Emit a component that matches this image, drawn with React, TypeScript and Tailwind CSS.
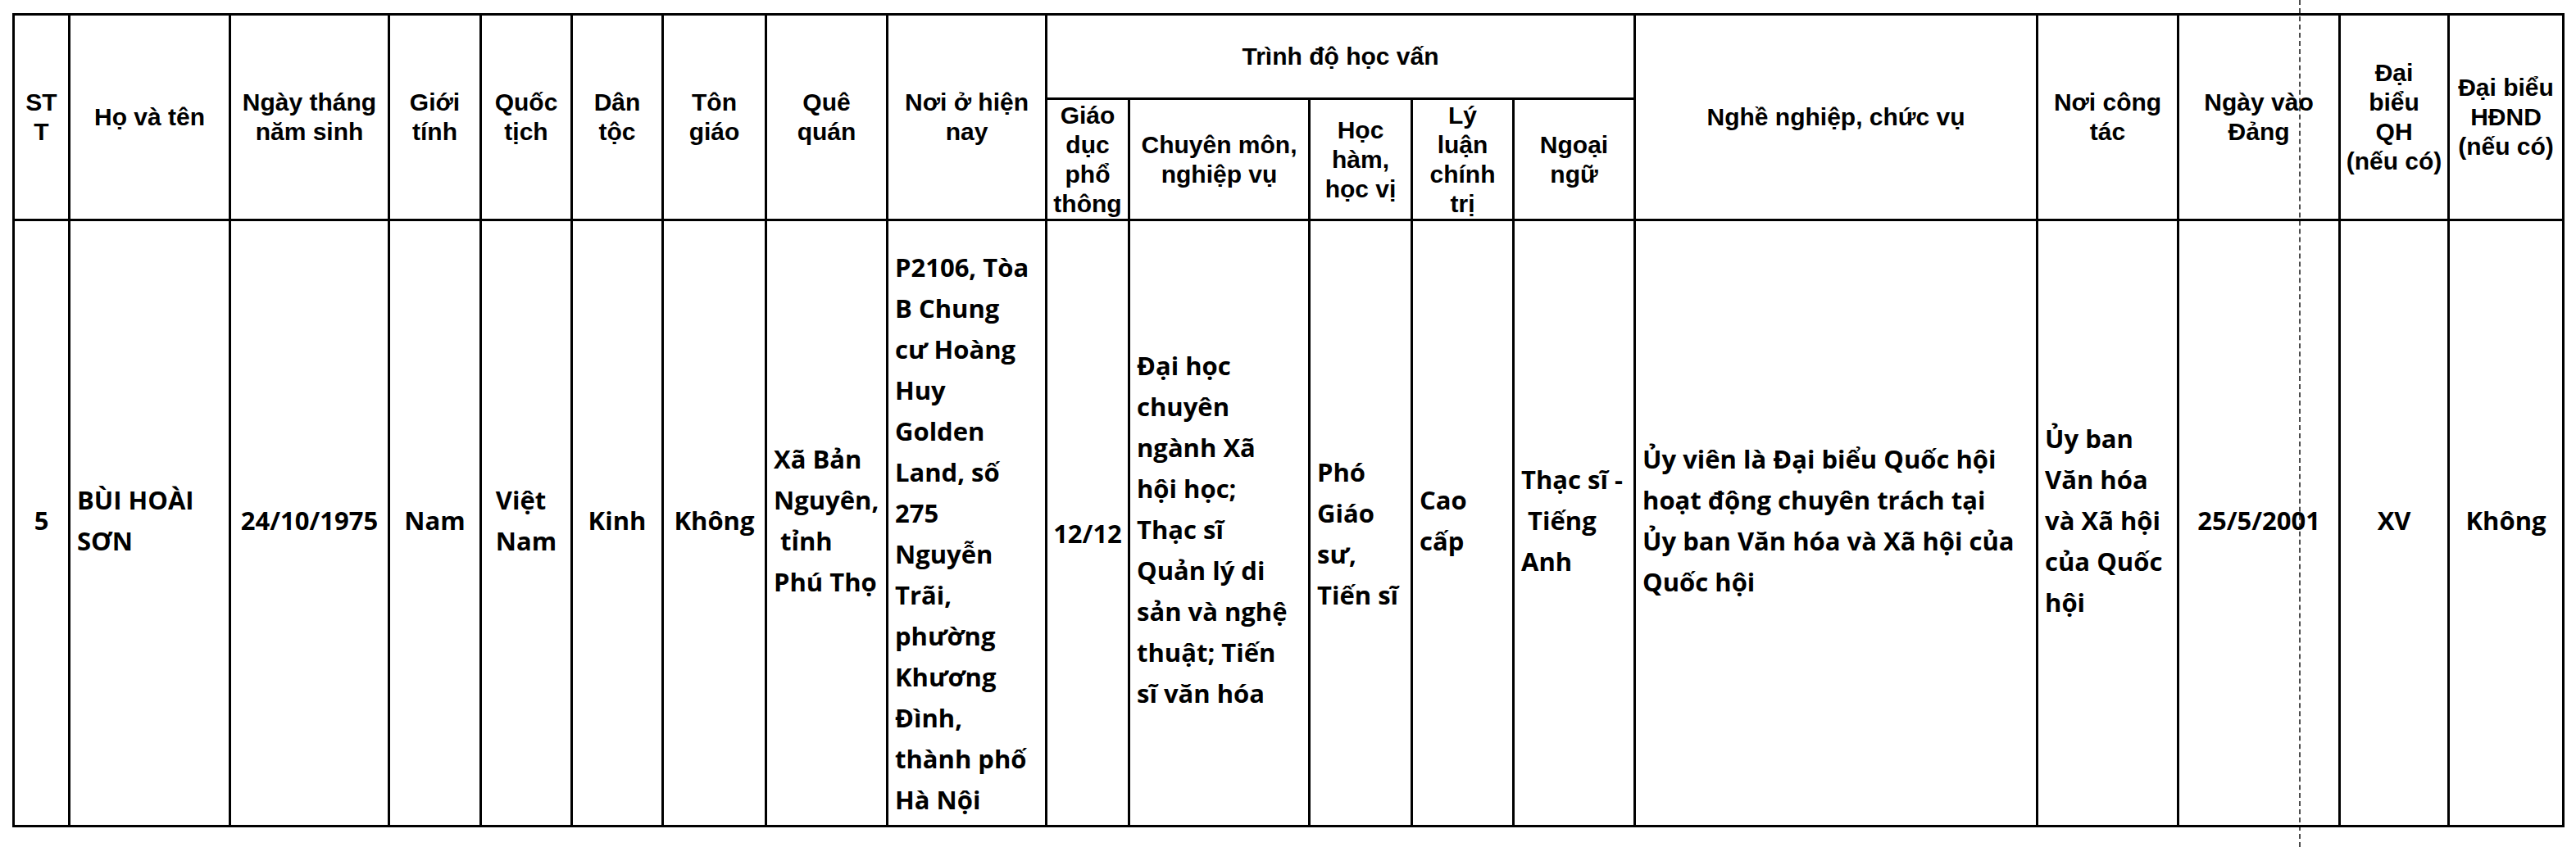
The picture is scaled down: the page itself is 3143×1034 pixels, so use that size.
import React from "react";

const cols = [68, 196, 194, 112, 111, 111, 126, 148, 194, 101, 220, 125, 124, 148, 491, 172, 197, 133, 140];

const thBase =
  "border-[3px] border-black align-middle text-center font-bold p-0 text-[30px] leading-[36px] text-black";

function Lines({ lines }: { lines: string[] }) {
  return (
    <>
      {lines.map((l, i) => (
        <div key={i} className="whitespace-nowrap">
          {l}
        </div>
      ))}
    </>
  );
}

function HCell({ lines, rowSpan, colSpan }: { lines: string[]; rowSpan?: number; colSpan?: number }) {
  return (
    <th rowSpan={rowSpan} colSpan={colSpan} className={thBase}>
      <Lines lines={lines} />
    </th>
  );
}

type Align = "center" | "left" | "block";
type Pos = "mid" | "low" | "lower";

function BCell({ lines, align, pos = "mid" }: { lines: string[]; align: Align; pos?: Pos }) {
  const pad =
    pos === "lower" ? " pt-[24px] pb-0" : pos === "low" ? " pt-[14px] pb-0" : " pt-0 pb-[8px]";
  const base =
    "border-[3px] border-black align-middle text-[31px] leading-[50px] font-bold text-black" + pad;
  if (align === "center") {
    return (
      <td className={base + " text-center px-0"}>
        <Lines lines={lines} />
      </td>
    );
  }
  if (align === "block") {
    return (
      <td className={base + " text-center px-0"}>
        <div className="inline-block text-left">
          <Lines lines={lines} />
        </div>
      </td>
    );
  }
  return (
    <td className={base + " text-left pl-[8px] pr-0"}>
      <Lines lines={lines} />
    </td>
  );
}

export default function App() {
  return (
    <div className="relative w-[3143px] h-[1034px] bg-white overflow-hidden pt-[16px] pl-[15px]">
      <table
        className="table-fixed border-collapse w-[3112px]"
        style={{ fontFamily: '"Liberation Sans", Arial, sans-serif' }}
      >
        <colgroup>
          {cols.map((w, i) => (
            <col key={i} style={{ width: w }} />
          ))}
        </colgroup>
        <thead>
          <tr className="h-[103px]">
            <HCell rowSpan={2} lines={["ST", "T"]} />
            <HCell rowSpan={2} lines={["Họ và tên"]} />
            <HCell rowSpan={2} lines={["Ngày tháng", "năm sinh"]} />
            <HCell rowSpan={2} lines={["Giới", "tính"]} />
            <HCell rowSpan={2} lines={["Quốc", "tịch"]} />
            <HCell rowSpan={2} lines={["Dân", "tộc"]} />
            <HCell rowSpan={2} lines={["Tôn", "giáo"]} />
            <HCell rowSpan={2} lines={["Quê", "quán"]} />
            <HCell rowSpan={2} lines={["Nơi ở hiện", "nay"]} />
            <HCell colSpan={5} lines={["Trình độ học vấn"]} />
            <HCell rowSpan={2} lines={["Nghề nghiệp, chức vụ"]} />
            <HCell rowSpan={2} lines={["Nơi công", "tác"]} />
            <HCell rowSpan={2} lines={["Ngày vào", "Đảng"]} />
            <HCell rowSpan={2} lines={["Đại", "biểu", "QH", "(nếu có)"]} />
            <HCell rowSpan={2} lines={["Đại biểu", "HĐND", "(nếu có)"]} />
          </tr>
          <tr className="h-[148px]">
            <HCell lines={["Giáo", "dục", "phổ", "thông"]} />
            <HCell lines={["Chuyên môn,", "nghiệp vụ"]} />
            <HCell lines={["Học", "hàm,", "học vị"]} />
            <HCell lines={["Lý", "luận", "chính", "trị"]} />
            <HCell lines={["Ngoại", "ngữ"]} />
          </tr>
        </thead>
        <tbody style={{ fontFamily: '"Open Sans", "Noto Sans", sans-serif' }}>
          <tr className="h-[740px]">
            <BCell align="center" lines={["5"]} />
            <BCell align="left" lines={["BÙI HOÀI", "SƠN"]} />
            <BCell align="center" lines={["24/10/1975"]} />
            <BCell align="center" lines={["Nam"]} />
            <BCell align="block" lines={["Việt", "Nam"]} />
            <BCell align="center" lines={["Kinh"]} />
            <BCell align="center" lines={["Không"]} />
            <BCell align="left" lines={["Xã Bản", "Nguyên,", "\u00a0tỉnh", "Phú Thọ"]} />
            <BCell
              align="left"
              pos="lower"
              lines={[
                "P2106, Tòa",
                "B Chung",
                "cư Hoàng",
                "Huy",
                "Golden",
                "Land, số",
                "275",
                "Nguyễn",
                "Trãi,",
                "phường",
                "Khương",
                "Đình,",
                "thành phố",
                "Hà Nội",
              ]}
            />
            <BCell align="center" pos="lower" lines={["12/12"]} />
            <BCell
              align="left"
              pos="low"
              lines={[
                "Đại học",
                "chuyên",
                "ngành Xã",
                "hội học;",
                "Thạc sĩ",
                "Quản lý di",
                "sản và nghệ",
                "thuật; Tiến",
                "sĩ văn hóa",
              ]}
            />
            <BCell align="left" pos="lower" lines={["Phó", "Giáo", "sư,", "Tiến sĩ"]} />
            <BCell align="left" lines={["Cao", "cấp"]} />
            <BCell align="left" lines={["Thạc sĩ -", "\u00a0Tiếng", "Anh"]} />
            <BCell
              align="left"
              lines={[
                "Ủy viên là Đại biểu Quốc hội",
                "hoạt động chuyên trách tại",
                "Ủy ban Văn hóa và Xã hội của",
                "Quốc hội",
              ]}
            />
            <BCell align="left" lines={["Ủy ban", "Văn hóa", "và Xã hội", "của Quốc", "hội"]} />
            <BCell align="center" lines={["25/5/2001"]} />
            <BCell align="center" lines={["XV"]} />
            <BCell align="center" lines={["Không"]} />
          </tr>
        </tbody>
      </table>
      <div className="absolute left-[2805px] top-0 h-[1034px] w-0 border-l-[2px] border-dashed border-black/70" />
    </div>
  );
}
